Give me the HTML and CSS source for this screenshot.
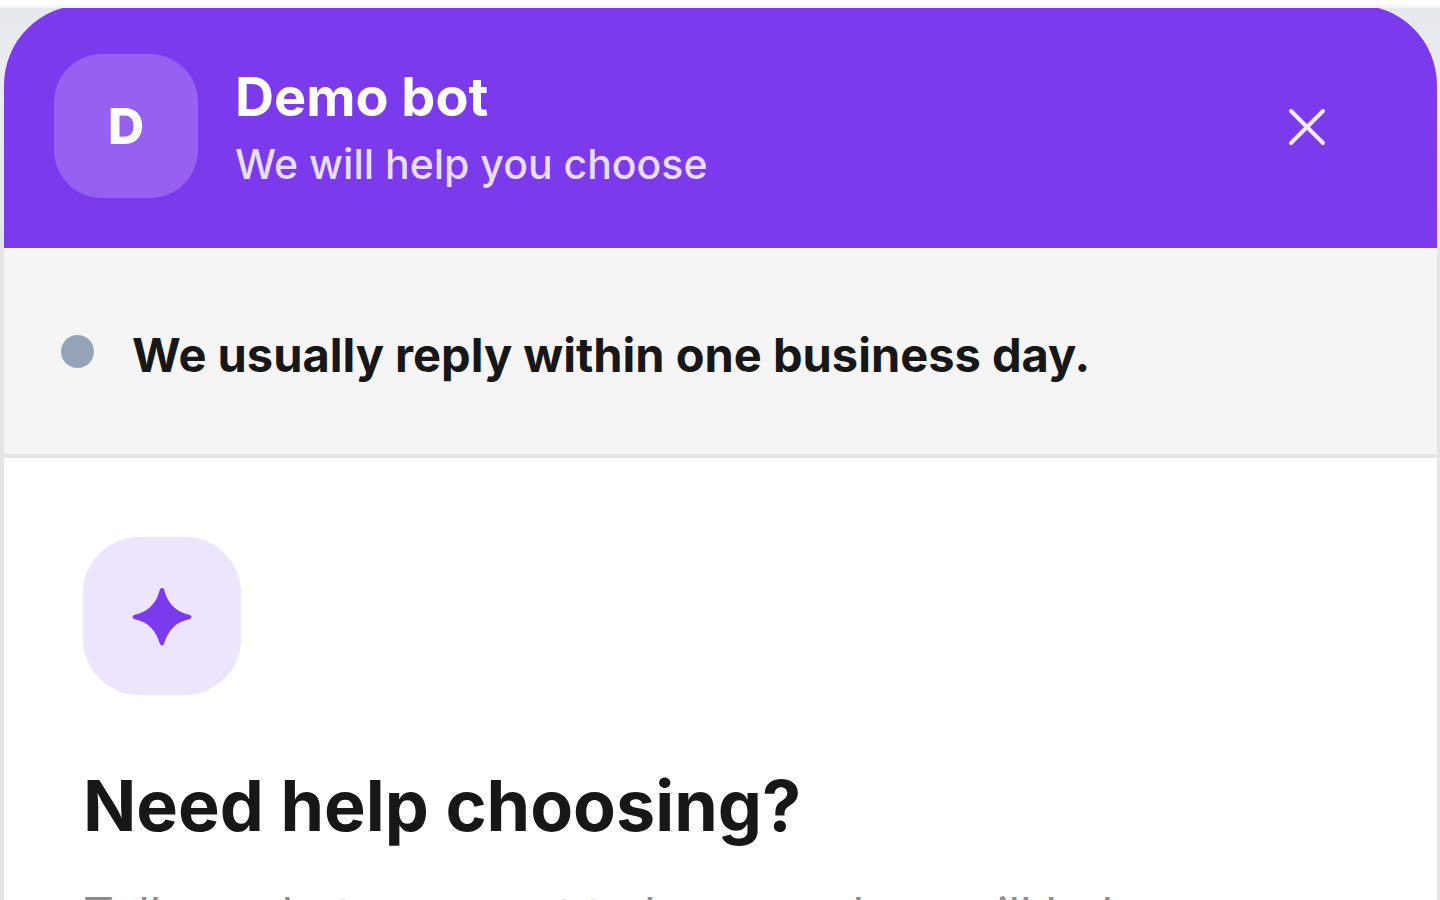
FILE: index.html
```
<!DOCTYPE html>
<html lang="en">
<head>
    <meta charset="UTF-8">
    <meta name="viewport" content="width=device-width, initial-scale=1.0">
    <title>Demo bot</title>
    <link rel="stylesheet" href="styles.css">
</head>
<body>
    <div class="top-strip"></div>
    <main class="widget">
        <header class="widget-header">
            <div class="avatar">D</div>
            <div class="header-text">
                <div class="bot-name">Demo bot</div>
                <div class="bot-tagline">We will help you choose</div>
            </div>
            <button class="close-btn" type="button" aria-label="Close">
                <svg width="40" height="40" viewBox="0 0 40 40" fill="none" stroke="currentColor" stroke-width="4" stroke-linecap="round">
                    <path d="M4 5L36 37M36 5L4 37"/>
                </svg>
            </button>
        </header>
        <div class="status">
            <span class="status-dot"></span>
            <span class="status-text">We usually reply within one business day.</span>
        </div>
        <section class="intro">
            <div class="intro-icon">
                <svg width="60" height="60" viewBox="0 0 60 60" fill="currentColor">
                    <path d="M28 3Q30 1 32 3C35 16 43 26 58 29Q61 31 58 33C43 36 36 45 32 58Q30 61 28 58C24 45 17 36 2 33Q-1 31 2 29C17 26 25 16 28 3Z"/>
                </svg>
            </div>
            <h1>Need help choosing?</h1>
            <p>Tell us what you want to know and we will help</p>
        </section>
    </main>
</body>
</html>
```

FILE: styles.css
```
* {
    box-sizing: border-box;
}
body {
    margin: 0;
    height: 100vh;
    overflow: hidden;
    font-family: Inter, "Liberation Sans", sans-serif;
    background: linear-gradient(#e6e8eb, #ebedf0 100px, #e5e5e5 240px);
    color: #171717;
}
.top-strip {
    position: relative;
    height: 8px;
    background: #ffffff;
    border-bottom: 3px solid #f5f5f8;
}
.widget {
    margin: -3px 3px 0 4px;
    min-height: 100vh;
    border-radius: 80px 80px 0 0;
    background: #ffffff;
    overflow: hidden;
}
.widget-header {
    display: flex;
    align-items: center;
    gap: 37px;
    padding: 49px 80px 50px 50px;
    background: #7c3aed;
    color: #ffffff;
}
.avatar {
    display: flex;
    align-items: center;
    justify-content: center;
    width: 144px;
    height: 144px;
    border-radius: 48px;
    background: rgba(255, 255, 255, 0.2);
    font-size: 50px;
    font-weight: 800;
}
.header-text {
    flex: 1;
    padding-top: 10px;
}
.bot-name {
    font-size: 54px;
    font-weight: 700;
    line-height: 66px;
}
.bot-tagline {
    font-size: 41px;
    font-weight: 500;
    line-height: 68px;
    color: #e9ddfd;
}
.close-btn {
    display: flex;
    align-items: center;
    justify-content: center;
    width: 100px;
    height: 100px;
    padding: 0;
    border: none;
    background: none;
    color: #f5edff;
    cursor: pointer;
}
.status {
    display: flex;
    align-items: center;
    gap: 38px;
    height: 210px;
    padding: 0 57px;
    background: #f5f5f5;
    border-bottom: 4px solid #e5e5e5;
    font-size: 47px;
    font-weight: 700;
}
.status-dot {
    width: 33px;
    height: 33px;
    border-radius: 50%;
    background: #94a3b8;
}
.status-text {
    padding-top: 6px;
}
.intro {
    padding: 79px;
}
.intro-icon {
    display: flex;
    align-items: center;
    justify-content: center;
    width: 158px;
    height: 158px;
    border-radius: 56px;
    background: #ede5fd;
    color: #7c3aed;
}
h1 {
    margin: 67px 0 0;
    font-size: 70px;
    font-weight: 700;
    line-height: 88px;
}
p {
    margin: 31px 0 0;
    font-size: 48px;
    line-height: 68px;
    color: #8c8c8c;
}
```
